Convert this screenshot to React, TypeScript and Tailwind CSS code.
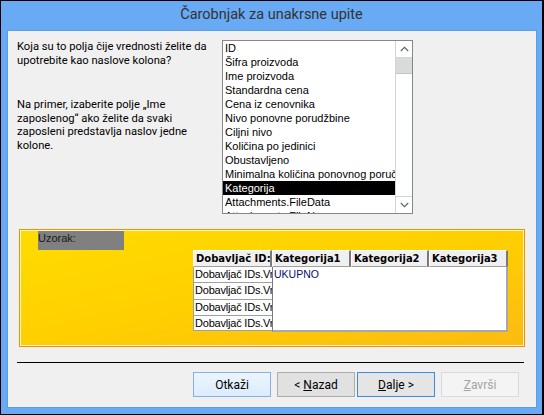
const listItems = [
  "ID",
  "Šifra proizvoda",
  "Ime proizvoda",
  "Standardna cena",
  "Cena iz cenovnika",
  "Nivo ponovne porudžbine",
  "Ciljni nivo",
  "Količina po jedinici",
  "Obustavljeno",
  "Minimalna količina ponovnog poručivanja",
  "Kategorija",
  "Attachments.FileData",
  "Attachments.FileName",
]

const headerCell =
  "h-[17px] bg-[#f0f0f0] border-t border-l border-white border-r-2 border-b border-r-[#7a7a7a] border-b-[#a0a0a0] px-[2px] font-['DejaVu_Sans',sans-serif] font-bold text-[10px] leading-[15px] text-black whitespace-nowrap overflow-hidden"

function Chevron({ down }: { down?: boolean }) {
  return (
    <svg width="9" height="6" viewBox="0 0 9 6" className={down ? "rotate-180" : ""}>
      <path d="M0.8 5 L4.5 1.3 L8.2 5" fill="none" stroke="#606060" strokeWidth="1.1" />
    </svg>
  )
}

export default function App() {
  return (
    <div className="w-[544px] h-[415px] bg-[#69aaf4] border-t border-l border-b border-r-2 border-black flex flex-col font-['Roboto',sans-serif]">
      <div className="h-[29px] flex items-center justify-center text-[14.5px] text-[#333333] pb-[1px]">
        Čarobnjak za unakrsne upite
      </div>

      <div className="ml-[6px] w-[530px] h-[378px] bg-[#f0f0f0] border border-[#5d9de4] flex flex-col">
        {/* top row: question + field list */}
        <div className="flex mt-[9px]">
          <div className="w-[214px] pl-[9px] text-[11.2px] leading-[13.5px] text-black">
            <p className="whitespace-nowrap">
              Koja su to polja čije vrednosti želite da
              <br />
              upotrebite kao naslove kolona?
            </p>
            <p className="whitespace-nowrap mt-[31px]">
              Na primer, izaberite polje „Ime
              <br />
              zaposlenog“ ako želite da svaki
              <br />
              zaposleni predstavlja naslov jedne
              <br />
              kolone.
            </p>
          </div>

          <div className="w-[191px] h-[174px] bg-white border border-[#828790] flex overflow-hidden">
            <div className="flex-1 overflow-hidden font-['Liberation_Sans',sans-serif] text-[11px] text-black">
              {listItems.map((item) => (
                <div
                  key={item}
                  className={`h-[14px] leading-[14px] pl-[2px] whitespace-nowrap overflow-hidden ${
                    item === "Kategorija" ? "bg-black text-white" : ""
                  }`}
                >
                  {item}
                </div>
              ))}
            </div>
            <div className="w-[17px] border-l border-[#d4d4d4] bg-white flex flex-col">
              <div className="h-[17px] flex items-center justify-center border-b border-[#d4d4d4]">
                <Chevron />
              </div>
              <div className="h-[16px] bg-[#dadada] border-b border-[#c4c4c4]" />
              <div className="flex-1" />
              <div className="h-[17px] flex items-center justify-center border-t border-[#d4d4d4]">
                <Chevron down />
              </div>
            </div>
          </div>
        </div>

        {/* sample panel */}
        <div className="ml-[11px] mt-[15px] w-[506px] h-[118px] border border-[#f39200]">
          <div className="w-full h-full border border-[#fff6c8] bg-gradient-to-br from-[#ffdc00] via-[#ffcf00] to-[#fbbb10] flex flex-col">
            <div className="ml-[17px] w-[86px] h-[19px] bg-[#808080] font-['Liberation_Sans',sans-serif] text-[11px] leading-[15px] text-[#1a1a1a]">
              Uzorak:
            </div>
            <div className="ml-[172px] flex">
              <div className="w-[79px] flex flex-col">
                <div className={headerCell}>Dobavljač ID:</div>
                {[16, 17, 16, 15].map((h, i) => (
                  <div
                    key={i}
                    style={{ height: h }}
                    className="bg-white border-l border-b border-[#a0a0a0] pl-[1px] font-['Liberation_Sans',sans-serif] text-[11px] tracking-[-0.2px] leading-[15px] text-black whitespace-nowrap overflow-hidden"
                  >
                    Dobavljač IDs.Vrednost
                  </div>
                ))}
              </div>
              <div className="w-[236px] flex flex-col">
                <div className="flex">
                  <div className={`${headerCell} w-[79px]`}>Kategorija1</div>
                  <div className={`${headerCell} w-[78px]`}>Kategorija2</div>
                  <div className={`${headerCell} w-[79px]`}>Kategorija3</div>
                </div>
                <div className="h-[65px] bg-white border-l border-[#7a7a7a] border-r-2 border-b-2 border-r-[#a8a8a8] border-b-[#a8a8a8] font-['Liberation_Sans',sans-serif] text-[10.5px] leading-[15px] text-[#0a0a6e] pl-[1px]">
                  UKUPNO
                </div>
              </div>
            </div>
          </div>
        </div>

        {/* separator */}
        <div className="ml-[9px] mt-[15px] w-[507px] h-px bg-black" />

        {/* buttons */}
        <div className="flex ml-[185px] mt-[9px] text-[12px] text-black">
          <button className="w-[78px] h-[25px] border border-[#7eb4ea] bg-gradient-to-b from-[#edf5fd] to-[#dcecfc]">
            Otkaži
          </button>
          <button className="ml-[6px] w-[78px] h-[25px] border border-[#adadad] bg-[#e1e1e1]">
            &lt; <span className="underline">N</span>azad
          </button>
          <button className="ml-[2px] w-[78px] h-[25px] border border-[#3c8ce4] bg-[#e5e5e5]">
            <span className="underline">D</span>alje &gt;
          </button>
          <button className="ml-[6px] w-[78px] h-[25px] border border-[#dadada] bg-[#f4f4f4] text-[#a3a3a3]">
            <span className="underline">Z</span>avrši
          </button>
        </div>
      </div>
    </div>
  )
}
